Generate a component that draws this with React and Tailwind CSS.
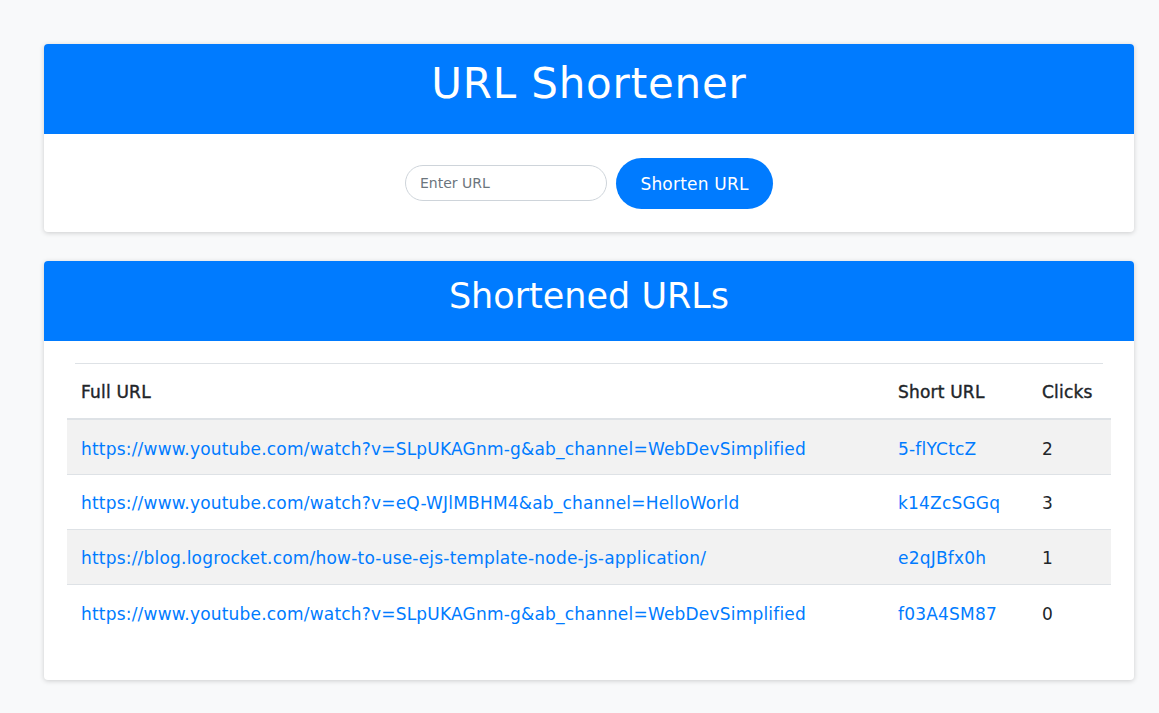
import React from 'react';

const rows = [
  { full: 'https://www.youtube.com/watch?v=SLpUKAGnm-g&ab_channel=WebDevSimplified', short: '5-flYCtcZ', clicks: 2 },
  { full: 'https://www.youtube.com/watch?v=eQ-WJlMBHM4&ab_channel=HelloWorld', short: 'k14ZcSGGq', clicks: 3 },
  { full: 'https://blog.logrocket.com/how-to-use-ejs-template-node-js-application/', short: 'e2qJBfx0h', clicks: 1 },
  { full: 'https://www.youtube.com/watch?v=SLpUKAGnm-g&ab_channel=WebDevSimplified', short: 'f03A4SM87', clicks: 0 },
];

export default function App() {
  return (
    <div className="min-h-[713px] bg-[#f8f9fa] pl-[44px] pr-[25px] pt-[44px] pb-8 text-[#212529]" style={{ fontFamily: '"DejaVu Sans", "Noto Sans", sans-serif' }}>
      {/* Shorten form card */}
      <div className="bg-white rounded-[4px] overflow-hidden shadow-[0_1px_5px_rgba(0,0,0,0.18)]">
        <div className="h-[90px] bg-[#007bff] flex items-center justify-center pb-[10px]">
          <h1 className="text-white text-[42px] leading-none tracking-[0.8px]">URL Shortener</h1>
        </div>
        <div className="h-[98px] flex items-center justify-center gap-[9px]">
          <input
            type="text"
            placeholder="Enter URL"
            className="w-[202px] h-[36px] rounded-full border border-[#ced4da] px-[14px] text-[14px] text-[#495057] placeholder:text-[#6c757d] outline-none"
          />
          <button className="w-[157px] h-[51px] rounded-full bg-[#007bff] text-white text-[17px] tracking-[0.2px] pt-[3px]">
            Shorten URL
          </button>
        </div>
      </div>

      {/* Shortened URLs card */}
      <div className="mt-[29px] bg-white rounded-[4px] overflow-hidden shadow-[0_1px_5px_rgba(0,0,0,0.18)]">
        <div className="h-[80px] bg-[#007bff] flex items-center justify-center pb-[10px]">
          <h2 className="text-white text-[35px] leading-none">Shortened URLs</h2>
        </div>
        <div className="px-[23px] pt-[22px] pb-[41px]">
          <div className="mx-[8px] h-px bg-[#dee2e6]" />
          <table className="w-full border-collapse text-[17px] tracking-[0.2px]">
            <thead>
              <tr className="h-[55px] border-b-2 border-[#dee2e6]">
                <th className="w-[817px] pl-[14px] pt-[4px] text-left font-normal [-webkit-text-stroke:0.4px_#212529]">Full URL</th>
                <th className="w-[144px] pl-[14px] pt-[4px] text-left font-normal [-webkit-text-stroke:0.4px_#212529]">Short URL</th>
                <th className="pl-[14px] pt-[4px] text-left font-normal [-webkit-text-stroke:0.4px_#212529]">Clicks</th>
              </tr>
            </thead>
            <tbody>
              {rows.map((r, i) => (
                <tr key={i} className={i % 2 === 0 ? 'h-[55px] bg-[#f2f2f2] border-b border-[#dee2e6]' : 'h-[55px] border-b border-[#dee2e6] last:border-b-0'}>
                  <td className="pl-[14px] pt-[5px]">
                    <a href="#" className="text-[#007bff]">{r.full}</a>
                  </td>
                  <td className="pl-[14px] pt-[5px]">
                    <a href="#" className="text-[#007bff]">{r.short}</a>
                  </td>
                  <td className="pl-[14px] pt-[5px]">{r.clicks}</td>
                </tr>
              ))}
            </tbody>
          </table>
        </div>
      </div>
    </div>
  );
}
